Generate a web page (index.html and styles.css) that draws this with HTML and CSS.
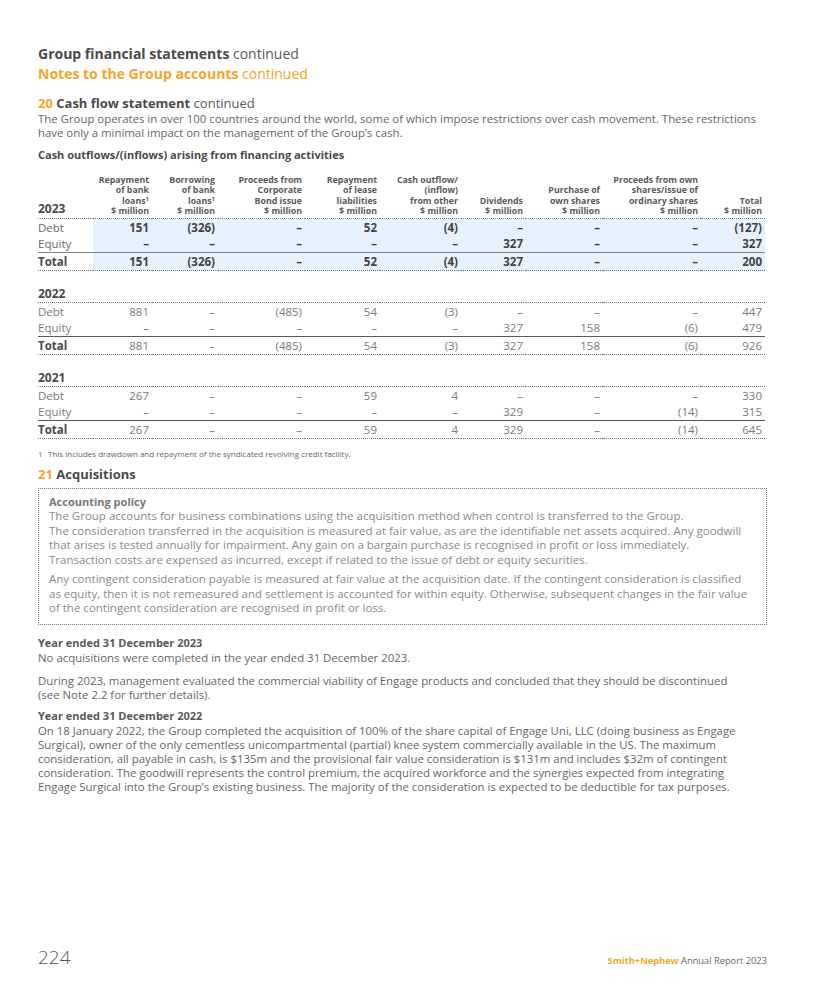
FILE: index.html
```html
<!DOCTYPE html>
<html lang="en">
<head>
<meta charset="utf-8">
<title>Group financial statements</title>
<link rel="stylesheet" href="styles.css">
</head>
<body>
<div class="page">
  <header class="page-head">
    <h1 class="h-main">Group financial statements <span class="cont">continued</span></h1>
    <h2 class="h-sub">Notes to the Group accounts <span class="cont">continued</span></h2>
  </header>

  <section class="note">
    <h3 class="note-title"><span class="num">20</span> Cash flow statement <span class="cont">continued</span></h3>
    <p class="body-text">The Group operates in over 100 countries around the world, some of which impose restrictions over cash movement. These restrictions have only a minimal impact on the management of the Group’s cash.</p>
    <h4 class="table-title">Cash outflows/(inflows) arising from financing activities</h4>

    <table class="cf">
      <colgroup>
        <col class="c-label"><col class="c1"><col class="c2"><col class="c3"><col class="c4"><col class="c5"><col class="c6"><col class="c7"><col class="c8"><col class="c9">
      </colgroup>
      <thead>
        <tr class="head-row">
          <th class="year">2023</th>
          <th>Repayment<br>of bank<br>loans<sup>1</sup><br>$ million</th>
          <th>Borrowing<br>of bank<br>loans<sup>1</sup><br>$ million</th>
          <th>Proceeds from<br>Corporate<br>Bond issue<br>$ million</th>
          <th>Repayment<br>of lease<br>liabilities<br>$ million</th>
          <th>Cash outflow/<br>(inflow)<br>from other<br>$ million</th>
          <th>Dividends<br>$ million</th>
          <th>Purchase of<br>own shares<br>$ million</th>
          <th>Proceeds from own<br>shares/issue of<br>ordinary shares<br>$ million</th>
          <th>Total<br>$ million</th>
        </tr>
      </thead>
      <tbody class="cur">
        <tr><td class="lbl">Debt</td><td>151</td><td>(326)</td><td>–</td><td>52</td><td>(4)</td><td>–</td><td>–</td><td>–</td><td>(127)</td></tr>
        <tr class="pre-total"><td class="lbl">Equity</td><td>–</td><td>–</td><td>–</td><td>–</td><td>–</td><td>327</td><td>–</td><td>–</td><td>327</td></tr>
        <tr class="total"><td class="lbl">Total</td><td>151</td><td>(326)</td><td>–</td><td>52</td><td>(4)</td><td>327</td><td>–</td><td>–</td><td>200</td></tr>
      </tbody>
      <tbody class="prev">
        <tr class="year-row"><td class="year" colspan="10">2022</td></tr>
        <tr><td class="lbl">Debt</td><td>881</td><td>–</td><td>(485)</td><td>54</td><td>(3)</td><td>–</td><td>–</td><td>–</td><td>447</td></tr>
        <tr class="pre-total"><td class="lbl">Equity</td><td>–</td><td>–</td><td>–</td><td>–</td><td>–</td><td>327</td><td>158</td><td>(6)</td><td>479</td></tr>
        <tr class="total"><td class="lbl">Total</td><td>881</td><td>–</td><td>(485)</td><td>54</td><td>(3)</td><td>327</td><td>158</td><td>(6)</td><td>926</td></tr>
      </tbody>
      <tbody class="prev">
        <tr class="year-row"><td class="year" colspan="10">2021</td></tr>
        <tr><td class="lbl">Debt</td><td>267</td><td>–</td><td>–</td><td>59</td><td>4</td><td>–</td><td>–</td><td>–</td><td>330</td></tr>
        <tr class="pre-total"><td class="lbl">Equity</td><td>–</td><td>–</td><td>–</td><td>–</td><td>–</td><td>329</td><td>–</td><td>(14)</td><td>315</td></tr>
        <tr class="total"><td class="lbl">Total</td><td>267</td><td>–</td><td>–</td><td>59</td><td>4</td><td>329</td><td>–</td><td>(14)</td><td>645</td></tr>
      </tbody>
    </table>
    <p class="footnote"><span class="fn-num">1</span>This includes drawdown and repayment of the syndicated revolving credit facility.</p>
  </section>

  <section class="note">
    <h3 class="note-title"><span class="num">21</span> Acquisitions</h3>
    <div class="policy">
      <h5 class="policy-title">Accounting policy</h5>
      <p>The Group accounts for business combinations using the acquisition method when control is transferred to the Group.<br>The consideration transferred in the acquisition is measured at fair value, as are the identifiable net assets acquired. Any goodwill<br>that arises is tested annually for impairment. Any gain on a bargain purchase is recognised in profit or loss immediately.<br>Transaction costs are expensed as incurred, except if related to the issue of debt or equity securities.</p>
      <p>Any contingent consideration payable is measured at fair value at the acquisition date. If the contingent consideration is classified<br>as equity, then it is not remeasured and settlement is accounted for within equity. Otherwise, subsequent changes in the fair value<br>of the contingent consideration are recognised in profit or loss.</p>
    </div>

    <h5 class="sub-title">Year ended 31 December 2023</h5>
    <p class="body-text">No acquisitions were completed in the year ended 31 December 2023.</p>
    <p class="body-text gap">During 2023, management evaluated the commercial viability of Engage products and concluded that they should be discontinued<br>(see Note 2.2 for further details).</p>

    <h5 class="sub-title gap">Year ended 31 December 2022</h5>
    <p class="body-text">On 18 January 2022, the Group completed the acquisition of 100% of the share capital of Engage Uni, LLC (doing business as Engage<br>Surgical), owner of the only cementless unicompartmental (partial) knee system commercially available in the US. The maximum<br>consideration, all payable in cash, is $135m and the provisional fair value consideration is $131m and includes $32m of contingent<br>consideration. The goodwill represents the control premium, the acquired workforce and the synergies expected from integrating<br>Engage Surgical into the Group’s existing business. The majority of the consideration is expected to be deductible for tax purposes.</p>
  </section>

  <footer class="page-foot">
    <span class="page-num">224</span>
    <span class="brand"><b>Smith+Nephew</b> Annual Report 2023</span>
  </footer>
</div>
</body>
</html>
```

FILE: styles.css
```css
html, body {
  margin: 0;
  padding: 0;
  background: #ffffff;
}
body {
  font-family: "Open Sans", Lato, sans-serif;
  color: #666666;
}
.page {
  width: 729px;
  height: 983px;
  padding: 44px 0 0 38px;
  box-sizing: content-box;
  display: flex;
  flex-direction: column;
  position: relative;
}
.page-head { margin: 0; }
.h-main {
  margin: 0;
  font-size: 14px;
  line-height: 20px;
  font-weight: 700;
  color: #4a4a4a;
}
.h-main .cont { font-weight: 400; color: #5a5a5a; }
.h-sub {
  margin: 0;
  font-size: 14px;
  line-height: 20px;
  font-weight: 700;
  color: #f5a52a;
}
.h-sub .cont { font-weight: 400; }

.note-title {
  margin: 0;
  font-size: 13px;
  line-height: 18px;
  font-weight: 700;
  color: #4a4a4a;
}
.note-title .num { color: #f5a52a; }
.note-title .cont { font-weight: 400; color: #5a5a5a; }
.note:first-of-type .note-title { margin-top: 10px; }

.body-text {
  margin: 0;
  font-size: 11.4px;
  line-height: 14px;
  color: #666;
}
.body-text.gap { margin-top: 9px; }
.table-title {
  margin: 8px 0 0;
  font-size: 11px;
  line-height: 14px;
  font-weight: 700;
  color: #4a4a4a;
}

.cf {
  border-collapse: collapse;
  table-layout: fixed;
  width: 727px;
  margin-top: 13px;
  font-size: 11.5px;
}
.c-label { width: 55px; }
.c1 { width: 59px; }
.c2 { width: 66px; }
.c3 { width: 87px; }
.c4 { width: 75px; }
.c5 { width: 81px; }
.c6 { width: 65px; }
.c7 { width: 77px; }
.c8 { width: 98px; }
.c9 { width: 64px; }

.cf th {
  font-size: 8.8px;
  line-height: 10.3px;
  font-weight: 700;
  color: #5a5a5a;
  text-align: right;
  vertical-align: bottom;
  padding: 0 3px 2px 0;
  border-bottom: 1px dotted #777;
  white-space: nowrap;
}
.cf th sup { font-size: 6px; line-height: 0; vertical-align: 3px; }
.cf th.year, .cf td.year {
  text-align: left;
  font-size: 12px;
  line-height: 14px;
  font-weight: 700;
  color: #4a4a4a;
}
.cf td {
  height: 17px;
  padding: 0 3px 0 0;
  text-align: right;
  vertical-align: middle;
  line-height: 14px;
  white-space: nowrap;
}
.cf .pre-total td { height: 16px; }
.cf td.lbl { text-align: left; font-weight: 400; }

.cur td { color: #444; font-weight: 700; background: #e5f1fb; }
.cur td.lbl { background: #ffffff; color: #6a6a6a; font-weight: 400; }
.cur .total td.lbl { font-weight: 700; color: #4a4a4a; }
.prev td { color: #7a7a7a; font-weight: 400; }
.prev td.lbl { color: #7a7a7a; }
.prev .total td.lbl { color: #4a4a4a; font-weight: 700; }

.pre-total td { border-bottom: 1px solid #5a5a5a; }
.cur .pre-total td { border-bottom-color: #808080; }
.total td { border-bottom: 1px dotted #777; }

.cf td.year {
  height: 30px;
  vertical-align: bottom;
  padding: 0 0 1px 0;
  border-bottom: 1px dotted #777;
  background: none;
}

.footnote {
  margin: 10px 0 0;
  font-size: 8px;
  line-height: 10px;
  color: #666;
}
.fn-num { display: inline-block; width: 10px; }

.note + .note .note-title { margin-top: 6px; }

.policy {
  margin-top: 5px;
  border: 1px dotted #777;
  padding: 5px 10px 8px 10px;
  color: #888;
}
.policy-title {
  margin: 0;
  font-size: 11px;
  line-height: 15px;
  font-weight: 700;
  color: #777;
}
.policy p {
  margin: 0;
  font-size: 11.5px;
  line-height: 14.5px;
  color: #8a8a8a;
}
.policy p + p { margin-top: 5px; }

.sub-title {
  margin: 11px 0 1px;
  font-size: 11px;
  line-height: 14px;
  font-weight: 700;
  color: #5a5a5a;
}
.sub-title.gap { margin-top: 7px; }

.page-foot {
  position: absolute;
  left: 38px;
  right: 0;
  top: 944px;
  display: flex;
  justify-content: space-between;
  align-items: baseline;
}
.page-num {
  font-size: 19px;
  font-weight: 300;
  color: #555;
}
.brand {
  font-size: 9.3px;
  color: #666;
}
.brand b { color: #f5a52a; }
```
